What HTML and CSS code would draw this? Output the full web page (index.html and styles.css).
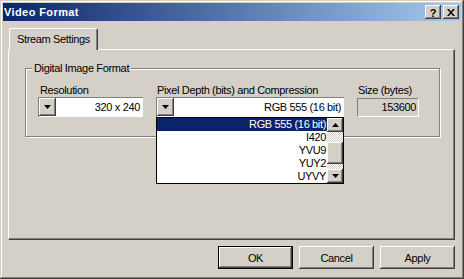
FILE: index.html
```html
<!DOCTYPE html>
<html>
<head>
<meta charset="utf-8">
<title>Video Format</title>
<link rel="stylesheet" href="styles.css">
</head>
<body>
<div class="window">
  <div class="titlebar">
    <span class="title">Video Format</span>
    <div class="caption-btns">
      <span class="cap-btn help">?</span>
      <span class="cap-btn close"><svg width="8" height="7" viewBox="0 0 8 7"><path d="M0 0h2l2 2.5L6 0h2L5 3.5 8 7H6L4 4.5 2 7H0l3-3.5z" fill="#000"/></svg></span>
    </div>
  </div>
  <div class="body">
    <div class="tabs"><div class="tab active">Stream Settings</div></div>
    <div class="panel">
      <fieldset class="group">
        <legend>Digital Image Format</legend>
        <div class="fields">
          <div class="field res">
            <label class="lbl">Resolution</label>
            <div class="combo">
              <span class="drop-btn"><svg width="7" height="4" viewBox="0 0 7 4"><path d="M0 0h7L3.5 4z" fill="#000"/></svg></span>
              <span class="value">320 x 240</span>
            </div>
          </div>
          <div class="field depth">
            <label class="lbl">Pixel Depth (bits) and Compression</label>
            <div class="combo">
              <span class="drop-btn"><svg width="7" height="4" viewBox="0 0 7 4"><path d="M0 0h7L3.5 4z" fill="#000"/></svg></span>
              <span class="value">RGB 555 (16 bit)</span>
              <div class="listbox">
                <ul class="items">
                  <li class="selected">RGB 555 (16 bit)</li>
                  <li>I420</li>
                  <li>YVU9</li>
                  <li>YUY2</li>
                  <li>UYVY</li>
                </ul>
                <div class="scrollbar">
                  <span class="sb-btn"><svg width="7" height="4" viewBox="0 0 7 4"><path d="M0 4h7L3.5 0z" fill="#000"/></svg></span>
                  <div class="sb-track"><span class="sb-thumb"></span></div>
                  <span class="sb-btn"><svg width="7" height="4" viewBox="0 0 7 4"><path d="M0 0h7L3.5 4z" fill="#000"/></svg></span>
                </div>
              </div>
            </div>
          </div>
          <div class="field size">
            <label class="lbl">Size (bytes)</label>
            <div class="static">153600</div>
          </div>
        </div>
      </fieldset>
    </div>
    <div class="footer">
      <span class="btn default">OK</span>
      <span class="btn">Cancel</span>
      <span class="btn">Apply</span>
    </div>
  </div>
</div>
</body>
</html>
```

FILE: styles.css
```css
* { box-sizing: border-box; }
html, body { margin: 0; padding: 0; }
body {
  width: 464px;
  height: 279px;
  overflow: hidden;
  background: #d4d0c8;
  font: 11px "Liberation Sans", Arial, sans-serif;
  letter-spacing: -0.35px;
  color: #000;
}
.window {
  width: 464px;
  height: 279px;
  display: flex;
  flex-direction: column;
  padding: 3px;
  background: #d4d0c8;
  box-shadow: inset -1px -1px #404040, inset 1px 1px #d4d0c8, inset -2px -2px #808080, inset 2px 2px #fff;
}
.titlebar {
  height: 18px;
  flex: none;
  display: flex;
  align-items: center;
  justify-content: space-between;
  padding: 0 2px 0 1px;
  background: linear-gradient(to right, #0a246a, #a6caf0);
}
.title {
  color: #fff;
  font-weight: bold;
  font-size: 11px;
  letter-spacing: 0.4px;
}
.caption-btns { display: flex; gap: 2px; }
.cap-btn {
  width: 16px;
  height: 14px;
  display: flex;
  align-items: center;
  justify-content: center;
  background: #d4d0c8;
  box-shadow: inset -1px -1px #404040, inset 1px 1px #fff, inset -2px -2px #808080;
}
.help { font-weight: bold; font-size: 11px; letter-spacing: 0; line-height: 14px; padding-top: 1px; }
.body {
  flex: 1;
  display: flex;
  flex-direction: column;
  padding: 7px 6px 7px 5px;
}
.tabs {
  height: 21px;
  flex: none;
  display: flex;
  align-items: flex-start;
  padding-left: 1px;
}
.tab {
  position: relative;
  z-index: 1;
  height: 22px;
  padding: 0 7px 0 7px;
  line-height: 20px;
  background: #d4d0c8;
  border-top: 1px solid #fff;
  border-left: 1px solid #fff;
  border-right: 1px solid #404040;
  border-radius: 2px 2px 0 0;
  box-shadow: inset -1px 0 #808080;
}
.panel {
  flex: 1;
  display: flex;
  flex-direction: column;
  border-top: 1px solid #fff;
  border-left: 1px solid #fff;
  border-right: 1px solid #404040;
  border-bottom: 1px solid #404040;
  box-shadow: inset -1px -1px #808080;
  padding: 12px 14px 0 16px;
}
.group {
  margin: 0;
  min-width: 0;
  border: 1px solid #808080;
  box-shadow: inset 1px 1px #fff, 1px 1px #fff;
  padding: 9px 12px 19px 12px;
}
.group legend {
  padding: 0 2px;
  margin-left: -6px;
  line-height: 13px;
  background: #d4d0c8;
}
.fields { display: flex; gap: 13px; }
.field { display: flex; flex-direction: column; }
.lbl { line-height: 13px; padding-left: 1px; }
.res .lbl { padding-left: 2px; }
.res { width: 105px; }
.depth { width: 188px; }
.size { width: 62px; }
.combo {
  position: relative;
  height: 20px;
  display: flex;
  background: #fff;
  padding: 1px;
  box-shadow: inset 1px 1px #808080, inset -1px -1px #fff;
}
.drop-btn {
  width: 17px;
  flex: none;
  display: flex;
  align-items: center;
  justify-content: center;
  background: #d4d0c8;
  box-shadow: inset -1px -1px #404040, inset 1px 1px #fff, inset -2px -2px #808080;
}
.value {
  flex: 1;
  text-align: right;
  line-height: 18px;
  padding-right: 2px;
}
.listbox {
  position: absolute;
  top: 100%;
  left: 0;
  width: 188px;
  height: 67px;
  border: 1px solid #000;
  background: #fff;
  display: flex;
  z-index: 2;
}
.items {
  flex: 1;
  list-style: none;
  margin: 0;
  padding: 0;
}
.items li {
  height: 13px;
  line-height: 13px;
  text-align: right;
  padding-right: 1px;
}
.items li.selected { background: #0a246a; color: #fff; }
.scrollbar {
  width: 16px;
  flex: none;
  display: flex;
  flex-direction: column;
}
.sb-btn {
  height: 14px;
  flex: none;
  display: flex;
  align-items: center;
  justify-content: center;
  background: #d4d0c8;
  box-shadow: inset -1px -1px #404040, inset 1px 1px #fff, inset -2px -2px #808080;
}
.sb-track {
  flex: 1;
  display: flex;
  flex-direction: column;
  background: repeating-conic-gradient(#d4d0c8 0 25%, #fff 0 50%) 0 0 / 2px 2px;
}
.sb-thumb {
  margin-top: 10px;
  height: 22px;
  background: #d4d0c8;
  box-shadow: inset -1px -1px #404040, inset 1px 1px #fff, inset -2px -2px #808080;
}
.static {
  height: 19px;
  margin-top: 1px;
  line-height: 17px;
  text-align: right;
  padding-right: 2px;
  border: 1px solid;
  border-color: #808080 #fff #fff #808080;
}
.footer {
  flex: none;
  display: flex;
  justify-content: flex-end;
  gap: 6px;
  margin-top: 6px;
}
.btn {
  width: 75px;
  height: 23px;
  display: flex;
  align-items: center;
  justify-content: center;
  background: #d4d0c8;
  box-shadow: inset -1px -1px #404040, inset 1px 1px #fff, inset -2px -2px #808080;
}
.btn.default {
  border: 1px solid #000;
}
```
